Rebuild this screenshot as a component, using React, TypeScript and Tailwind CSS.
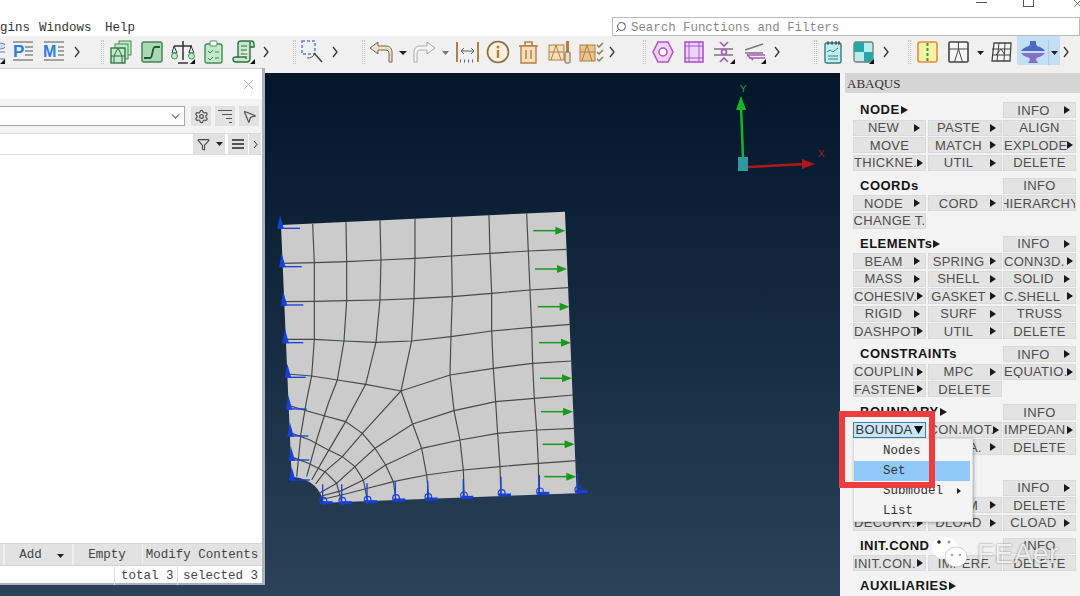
import React from "react";
import { X, ChevronDown, Search, Settings, MousePointer2, Filter } from "lucide-react";

const mono = { fontFamily: '"Liberation Mono", monospace' };

function S({ w, h = 24, className = "", children }: { w: number; h?: number; className?: string; children?: React.ReactNode }) {
  return (
    <svg width={w} height={h} viewBox={`0 0 ${w} ${h}`} className={`shrink-0 ${className}`} fill="none">
      {children}
    </svg>
  );
}
const Chev = ({ className }: { className: string }) => (
  <S w={6} className={className}><path d="M1 7l4 5-4 5" stroke="#333" strokeWidth="1.3" /></S>
);
const Sep = ({ className }: { className: string }) => (
  <div className={`w-[3px] h-[24px] border-x border-dotted border-[#c4c4c4] ${className}`} />
);
const Caret = ({ className, w = 8, c = "#222" }: { className: string; w?: number; c?: string }) => (
  <S w={w} className={className}><path d={`M0 11h${w}l-${w / 2} 4z`} fill={c} /></S>
);
const Corner = ({ x }: { x: number }) => <path d={`M${x} 24v-5l-5 5z`} fill="#111" />;

const G = "#3f8f55", GF = "#c3e8cb", T = "#b5803f", TF = "#f5dfbd", P = "#ad55c6", PF = "#efd3f7";

function Toolbar() {
  return (
    <div className="flex h-[37px] items-start pt-[4px] bg-[#f0f0f0] overflow-hidden">
      <S w={5}><ellipse cx="-1" cy="6" rx="7" ry="3" fill="#cfe0f2" stroke="#5b7fa8" /><path d="M6 6v13M-1 12h7M-1 19h7" stroke="#5b7fa8" /><Corner x={5} /></S>
      <S w={20} className="ml-[8px]">
        <text x="0" y="17" fontFamily="Liberation Sans" fontWeight="700" fontSize="17" fill="#2c7fdc">P</text>
        <path d="M0 2h20M12 7h8M12 11h8M12 15h8M0 20h20" stroke="#888" strokeWidth="1.3" />
      </S>
      <S w={20} className="ml-[11px]">
        <text x="-1" y="17" fontFamily="Liberation Sans" fontWeight="700" fontSize="16" fill="#2c7fdc">M</text>
        <path d="M0 2h20M14 7h6M14 11h6M14 15h6M0 20h20" stroke="#888" strokeWidth="1.3" />
      </S>
      <Chev className="ml-[10px]" />
      <Sep className="ml-[21px]" />
      <S w={22} className="ml-[6px]">
        <rect x="9" y="1" width="12" height="14" fill={GF} stroke={G} /><rect x="5" y="4" width="13" height="15" fill={GF} stroke={G} />
        <rect x="1" y="8" width="14" height="15" fill={GF} stroke="#2e6e40" strokeWidth="1.3" /><path d="M1 16h14M8 8l-4 8v7M8 8l4 8v7" stroke="#2e6e40" />
      </S>
      <S w={22} className="ml-[9px]">
        <rect x="1" y="2" width="20" height="20" rx="2" fill="#a9d9b4" stroke="#4e7f5a" strokeWidth="1.5" />
        <path d="M3 18h6c3 0 2-11 5-11h5" stroke="#1f5a30" strokeWidth="1.8" />
      </S>
      <S w={24} className="ml-[8px]">
        <path d="M12 1v19M3 6h18M7 23h10" stroke="#333" strokeWidth="1.5" />
        <path d="M3 6l-2 7h5zM20 6l-2 7h5z" stroke="#333" /><circle cx="3.500" cy="16" r="3" fill={GF} stroke={G} /><circle cx="20.500" cy="16" r="3" fill={GF} stroke={G} /><Corner x={24} />
      </S>
      <S w={19} className="ml-[9px]">
        <rect x="1" y="4" width="17" height="19" rx="2" fill={GF} stroke={G} strokeWidth="1.4" /><rect x="6" y="1" width="7" height="5" rx="1" fill="#fff" stroke={G} />
        <path d="M4 11l2 2 3-3M11 12h4M4 18l2 2 3-3M11 18h4" stroke={G} />
      </S>
      <S w={23} className="ml-[9px]">
        <path d="M6 18V4c0-2 1-3 3-3h10c2 0 3 1 3 3v3h-4M18 2v16c0 3-1 4-3 4H4c-2 0-3-1-3-3s1-2 3-2h10v2" fill={GF} stroke="#2e6e40" strokeWidth="1.4" />
        <path d="M9 6h6M9 10h6M9 14h6" stroke="#2e6e40" /><Corner x={23} />
      </S>
      <Chev className="ml-[8px]" />
      <Sep className="ml-[24px]" />
      <S w={22} className="ml-[5px]">
        <rect x="1" y="1" width="13" height="13" stroke="#6a78d8" strokeWidth="1.5" strokeDasharray="3 2" fill="#eef0fb" />
        <path d="M13 13l8 9" stroke="#444" strokeWidth="1.6" /><path d="M6 18a8 8 0 0 0 8-5" stroke="#555" />
      </S>
      <Chev className="ml-[9px]" />
      <Sep className="ml-[24px]" />
      <S w={24} className="ml-[4px]"><path d="M1 8l8-6v4h8c4 0 6 3 6 6v10h-3v-8c0-3-1-4-4-4H9v4z" fill={TF} stroke="#666" /></S>
      <Caret className="ml-[6px]" />
      <S w={23} className="ml-[6px]"><path d="M22 8l-8-6v4H7c-4 0-6 3-6 6v10h3v-8c0-3 1-4 4-4h6v4z" fill="#f6f6f6" stroke="#aaa" /></S>
      <Caret className="ml-[6px]" w={7} c="#777" />
      <S w={23} className="ml-[7px]">
        <path d="M1 2v20M22 2v20" stroke={T} strokeWidth="2" /><path d="M5 11h13M5 11l3-3M5 11l3 3M18 11l-3-3M18 11l-3 3" stroke="#666" />
        <path d="M4 21h15" stroke="#666" strokeDasharray="1 3" strokeWidth="3" />
      </S>
      <S w={24} className="ml-[7px]"><circle cx="12" cy="12" r="10.500" fill="#fbeeda" stroke="#8a6a45" strokeWidth="1.6" /><circle cx="12" cy="7" r="1.500" fill={T} /><path d="M12 10v8" stroke={T} strokeWidth="2.400" /></S>
      <S w={21} className="ml-[8px]">
        <path d="M1 6h19M7 5V2h7v3" stroke={T} strokeWidth="1.6" /><path d="M3 6h15v17H3z" fill={TF} stroke={T} strokeWidth="1.4" /><path d="M8 10v9M13 10v9" stroke={T} strokeWidth="1.4" />
      </S>
      <S w={23} className="ml-[9px]">
        <rect x="1" y="5" width="15" height="15" fill={TF} stroke={T} /><path d="M1 12h15M8 5l-5 15M8 5l5 15" stroke={T} />
        <rect x="18" y="1" width="3" height="11" fill={T} /><rect x="17" y="12" width="5" height="11" rx="1" fill={TF} stroke="#666" />
      </S>
      <S w={25} className="ml-[8px]">
        <rect x="1" y="5" width="15" height="16" fill="#e7c592" stroke={T} /><path d="M1 12h15M8 5l-5 16M8 5l5 16" stroke={T} />
        <path d="M18 5l2 2 4-4M18 12l2 2 4-4M18 19l2 2 4-4" stroke="#8a7a50" strokeWidth="1.5" />
      </S>
      <Chev className="ml-[5px]" />
      <Sep className="ml-[28px]" />
      <S w={22} className="ml-[6px]"><path d="M6 2h10l5 10-5 10H6L1 12z" fill={PF} stroke={P} strokeWidth="1.5" /><circle cx="11" cy="12" r="4" fill="#fff" stroke={P} strokeWidth="1.5" /></S>
      <S w={20} className="ml-[10px]"><rect x="1" y="2" width="18" height="20" fill={PF} stroke={P} strokeWidth="1.6" /><path d="M5 2v20M15 2v20M1 6h18M1 18h18" stroke={P} /></S>
      <S w={21} className="ml-[10px]">
        <path d="M0 9h19M0 15h19" stroke="#777" strokeWidth="1.5" /><circle cx="10" cy="12" r="2.500" stroke={P} strokeWidth="1.6" /><path d="M6 2l4 4 4-4M6 22l4-4 4 4" stroke={P} strokeWidth="1.6" /><Corner x={21} />
      </S>
      <S w={21} className="ml-[10px]">
        <path d="M0 10L18 4M0 13h18" stroke="#777" strokeWidth="1.4" /><path d="M2 15h18M2 15l6 5M4 18l16 0" stroke={P} strokeWidth="1.6" /><Corner x={21} />
      </S>
      <Chev className="ml-[8px]" />
      <Sep className="ml-[34px]" />
      <S w={18} className="ml-[7px]">
        <rect x="1" y="3" width="16" height="20" rx="2" fill="#c5eeee" stroke="#2b7f86" strokeWidth="1.4" /><path d="M4 1v4M8 1v4M12 1v4M15 1v4" stroke="#333" />
        <path d="M3 12l3-2 3 2 5-4M4 16h10M4 19h10" stroke="#2b7f86" />
      </S>
      <S w={21} className="ml-[11px]">
        <rect x="1" y="2" width="19" height="20" rx="2" fill="#b8ecea" stroke="#777" strokeWidth="1.3" />
        <rect x="1" y="2" width="10" height="10" fill="#2ba5a8" /><rect x="11" y="12" width="9" height="10" fill="#2ba5a8" /><Corner x={21} />
      </S>
      <Chev className="ml-[9px]" />
      <Sep className="ml-[19px]" />
      <S w={21} className="ml-[6px]"><rect x="1" y="2" width="19" height="20" rx="2" fill="#f4f4a6" stroke="#e88a3c" strokeWidth="1.6" /><path d="M10.500 3v18" stroke="#3f9a3c" strokeWidth="2" strokeDasharray="3 2" /></S>
      <S w={21} className="ml-[10px]"><rect x="1" y="2" width="19" height="20" rx="1" fill="#f6f6f6" stroke="#444" strokeWidth="1.6" /><path d="M1 9h19M10.500 2v7M10.500 9l-4 13M10.500 9l4 13" stroke="#444" /></S>
      <Caret className="ml-[8px]" w={7} />
      <S w={21} className="ml-[7px]"><path d="M3 3h17l-1 18H1z" fill="#f4f4f4" stroke="#444" strokeWidth="1.3" /><path d="M1 9h19M1 15h18M8 3L6 21M14 3l-1 18M10 9l-5 6M10 9l4 6" stroke="#444" /></S>
      <div className="ml-[5px] w-[43px] h-[29px] -mt-[4px] bg-[#c4dff5] flex items-start pt-[4px] pl-[3px]">
        <S w={26}>
          <path d="M10 1h6v3l1 2H9l1-2z" fill="#4f6ac4" />
          <path d="M1 11C4 7 9 5.500 13 5.500S22 7 25 11z" fill="#4f6ac4" />
          <path d="M1 13c3 4 8 5 12 5s9-1 12-5z" fill="#8470c4" />
          <path d="M9 17h8l-1 3 2 3H8l2-3z" fill="#8470c4" />
        </S>
        <div className="w-px h-[25px] bg-[#a8cbe8] ml-[2px]" />
        <Caret className="ml-[2px]" w={7} />
      </div>
      <Chev className="ml-[3px]" />
    </div>
  );
}

const Tri = ({ className = "", w = 6, h = 8 }: { className?: string; w?: number; h?: number }) => (
  <svg width={w} height={h} viewBox="0 0 6 8" preserveAspectRatio="none" className={`shrink-0 ${className}`}><path d="M0 0l6 4-6 4z" fill="#1a1a1a" /></svg>
);

type B = string | null;
function Btn({ b }: { b: B }) {
  if (b === null) return <div className="h-[16px]" />;
  const arrow = b.endsWith(">");
  const label = arrow ? b.slice(0, -1) : b;
  const long = arrow && label.length >= 7;
  return (
    <div className="h-[16px] bg-[#e3e3e3] border border-[#dadada] flex items-center overflow-hidden text-[13px] leading-none tracking-[0.3px] text-[#4d4d4d]">
      <span className={`flex-1 min-w-0 flex overflow-hidden whitespace-nowrap ${long ? "justify-start" : "justify-center"}`}>{label}</span>
      {arrow && <Tri className={long ? "mr-[2px] -ml-[4px]" : "mr-[5px] ml-[1px]"} />}
    </div>
  );
}

const sections: { title: string; arrow?: boolean; info?: string; rows: B[][] }[] = [
  { title: "NODE", arrow: true, info: "INFO>", rows: [["NEW>", "PASTE>", "ALIGN"], ["MOVE", "MATCH>", "EXPLODE>"], ["THICKNE.>", "UTIL>", "DELETE"]] },
  { title: "COORDs", info: "INFO", rows: [["NODE>", "CORD>", "HIERARCHY"], ["CHANGE T.", null, null]] },
  { title: "ELEMENTs", arrow: true, info: "INFO>", rows: [["BEAM>", "SPRING>", "CONN3D.>"], ["MASS>", "SHELL>", "SOLID>"], ["COHESIV.>", "GASKET>", "C.SHELL>"], ["RIGID>", "SURF>", "TRUSS"], ["DASHPOT>", "UTIL>", "DELETE"]] },
  { title: "CONSTRAINTs", info: "INFO>", rows: [["COUPLIN>", "MPC>", "EQUATIO.>"], ["FASTENE>", "DELETE", null]] },
  { title: "BOUNDARY", arrow: true, info: "INFO", rows: [["BOUNDA", "CON.MOT.>", "IMPEDAN>"], ["INERTIA", "MEDIA.>", "DELETE"], [null, null, null]] },
  { title: "LOADs", info: "INFO>", rows: [["BEAM", "FORM>", "DELETE"], ["DECURR.>", "DLOAD>", "CLOAD>"]] },
  { title: "INIT.COND", info: "INFO", rows: [["INIT.CON.>", "IMPERF.", "DELETE"]] },
  { title: "AUXILIARIES", arrow: true, rows: [["", "", ""]] },
];

function Panel() {
  return (
    <div className="w-[240px] shrink-0 bg-[#f3f3f3] overflow-hidden" style={{ fontFamily: '"Liberation Sans", sans-serif' }}>
      <div className="ml-[5px] h-[20px] bg-[#d6d6d6] flex items-center pl-[2px] pt-[1px] text-[#333] text-[13px]" style={{ fontFamily: '"Liberation Serif", serif' }}>ABAQUS</div>
      <div className="pt-[9px] pl-[13px] flex flex-col gap-y-[7px]">
        {sections.map((s) => (
          <div key={s.title} className="grid grid-cols-[73px_74px_73px] gap-x-[1.500px] gap-y-[1.500px]">
            <div className="col-span-2 h-[16px] pl-[7px] flex items-center gap-[1px] font-bold text-[13px] tracking-[0.5px] text-[#151515]">
              {s.title}{s.arrow && <Tri w={7} h={8} />}
            </div>
            {s.info ? <Btn b={s.info} /> : <div className="h-[16px]" />}
            {s.rows.flat().map((b, i) =>
              s.title === "BOUNDARY" && i === 0 ? (
                <div key={i} className="h-[16px] bg-[#cde5f8] border border-[#3a7fb8] flex items-center text-[13px] tracking-[0.2px] text-[#333] leading-none overflow-hidden">
                  <span className="flex-1 text-center">BOUNDA</span>
                  <svg width="9" height="8" viewBox="0 0 9 8" className="mr-[2px] shrink-0"><path d="M0 0h9L4.500 8z" fill="#111" /></svg>
                </div>
              ) : (
                <Btn key={i} b={b} />
              )
            )}
          </div>
        ))}
      </div>
    </div>
  );
}

const polys = [
  "50,190 150,188 245,185 348,180 450,175 560,168 675,160 790,153 905,148",
  "55,305 148,304 245,302 345,300 447,296 562,290 680,280 795,270 910,263",
  "60,418 148,418 237,423 333,427 440,423 558,410 680,393 800,382 917,373",
  "67,522 140,528 217,540 302,553 408,573 555,525 685,505 803,490 920,483",
  "143,72 148,188 148,300 148,418 140,528 125,600 108,700 95,830",
  "243,66 245,185 245,302 237,423 217,540 190,610 155,720 125,830",
  "345,60 348,180 345,300 333,427 302,553 242,665 180,770 140,840",
  "450,55 450,175 447,296 440,423 408,573 292,700 232,770 180,815 152,852",
  "408,573 443,672 470,745 485,825 492,897",
  "560,50 560,168 562,290 558,410 555,525 567,632 585,720 595,810 598,892",
  "672,45 675,160 680,280 680,393 685,505 692,605 698,700 705,800 708,885",
  "785,40 790,153 795,270 800,382 803,490 808,595 815,690 820,790 822,880",
  "925,585 808,595 692,605 567,632 443,672 330,745 270,800 215,850 165,878",
  "930,685 815,690 698,700 585,720 470,745 362,795 295,840 230,872 170,888",
  "935,782 820,790 705,800 595,810 485,825 385,845 308,865 230,885 175,897",
  "72,617 150,640 242,665 292,700 330,745 362,795 385,845 393,900",
  "75,698 135,720 180,745 232,770 270,800 295,840 308,905",
  "78,770 130,790 180,815 215,850 230,908",
];
const leftNodes = [[45, 75], [50, 190], [55, 305], [60, 418], [67, 522], [70, 617], [75, 698], [78, 770], [80, 830]];
const botNodes = [[175, 908], [232, 908], [308, 905], [393, 900], [490, 897], [597, 892], [710, 885], [825, 880], [940, 875]];
const arrows = [[805, 92], [810, 207], [818, 320], [822, 428], [825, 535], [828, 635], [833, 733], [838, 830]];

function Scene() {
  return (
    <svg width="840" height="523" viewBox="0 73 840 523" className="absolute inset-0" fill="none">
      <g transform="translate(265 200) scale(0.3333)">
        <path d="M48 75L900 35L935 880L175 908C170 870 140 835 80 830Z" fill="#cbcbcb" />
        {polys.map((p, i) => <polyline key={i} points={p} stroke="#45494c" strokeWidth="3.500" />)}
        {leftNodes.map(([x, y], i) => (
          <g key={i}>
            <path d={`M${x - 8} ${y + 12}L${x} ${y - 30}L${x + 12} ${y + 12}Z`} fill="#1640d8" />
            <path d={`M${x} ${y + 10}h${i < 3 ? 60 : 55}`} stroke="#1640d8" strokeWidth="4" />
          </g>
        ))}
        {botNodes.map(([x, y], i) => (
          <g key={i}>
            <path d={`M${x - 2} ${y}v-55`} stroke="#1640d8" strokeWidth="4" />
            <circle cx={x} cy={y - 6} r="10" stroke="#1640d8" strokeWidth="3.500" />
            <path d={`M${x - 8} ${y}h36`} stroke="#1640d8" strokeWidth="9" />
          </g>
        ))}
        {arrows.map(([x, y], i) => (
          <g key={i}>
            <path d={`M${x} ${y}h70`} stroke="#179a1c" strokeWidth="4.500" />
            <path d={`M${x + 66} ${y - 12}L${x + 96} ${y}L${x + 66} ${y + 12}Z`} fill="#179a1c" />
          </g>
        ))}
      </g>
      <path d="M743 158L741 106" stroke="#12b52a" strokeWidth="2.500" />
      <path d="M741 96L736 110H746Z" fill="#12b52a" />
      <path d="M748 167L805 164" stroke="#b01818" strokeWidth="2.500" />
      <path d="M815 164L802 159V169Z" fill="#b01818" />
      <rect x="738" y="157" width="10" height="14" fill="#2f979e" />
      <text x="740" y="92" fontFamily="Liberation Mono" fontSize="11" fill="#1f9f35">Y</text>
      <text x="818" y="157" fontFamily="Liberation Mono" fontSize="11" fill="#a02020">X</text>
    </svg>
  );
}

function Dialog() {
  return (
    <div className="absolute left-0 top-[68px] w-[265px] h-[517px] bg-white border-r-[3px] border-b-[2px] border-[#aab2ba] flex flex-col text-[12.500px] text-[#444]" style={mono}>
      <div className="h-[31px] flex items-center justify-end pr-[5px] border-t border-[#ccc]">
        <X size={17} strokeWidth={1} color="#999" />
      </div>
      <div className="h-[34px] bg-[#f3f3f3] flex items-center pr-[3px]">
        <div className="w-[185px] h-[20px] bg-white border border-[#aaa] border-l-0 flex items-center justify-end pr-[2px]">
          <ChevronDown size={13} color="#666" />
        </div>
        <div className="ml-[6px] w-[20px] h-[20px] bg-[#e2e2e2] flex items-center justify-center"><Settings size={15} color="#555" /></div>
        <div className="ml-[4px] w-[20px] h-[20px] bg-[#e2e2e2] flex flex-col items-end justify-center gap-[3px] pr-[3px]">
          <div className="w-[14px] h-px bg-[#555]" /><div className="w-[10px] h-px bg-[#555]" /><div className="w-[6px] h-px bg-[#555]" /><div className="w-[3px] h-px bg-[#555]" />
        </div>
        <div className="ml-[4px] w-[20px] h-[20px] bg-[#e2e2e2] flex items-center justify-center"><MousePointer2 size={15} color="#555" /></div>
      </div>
      <div className="h-[22px] flex items-center bg-white border-y border-[#ddd]">
        <div className="ml-[193px] w-[20px] h-[20px] bg-[#e2e2e2] flex items-center justify-center"><Filter size={13} color="#444" /></div>
        <div className="w-[12px] h-[20px] bg-[#e2e2e2] flex items-center justify-center"><svg width="7" height="4" viewBox="0 0 7 4"><path d="M0 0h7L3.500 4z" fill="#222" /></svg></div>
        <div className="ml-[3px] w-[20px] h-[20px] bg-[#e2e2e2] flex flex-col items-center justify-center gap-[2px]">
          <div className="w-[12px] h-[2px] bg-[#555]" /><div className="w-[12px] h-[2px] bg-[#555]" /><div className="w-[12px] h-[2px] bg-[#555]" />
        </div>
        <div className="ml-[1px] w-[12px] h-[20px] bg-[#e2e2e2] flex items-center justify-center"><svg width="5" height="9" viewBox="0 0 5 9"><path d="M1 1l3 3.500-3 3.500" stroke="#333" fill="none" /></svg></div>
      </div>
      <div className="flex-1 bg-white" />
      <div className="h-[23px] bg-[#f0f0f0] flex border-y border-[#d2d2d2]">
        <div className="w-[3px] bg-[#e2e2e2]" />
        <div className="ml-[2px] w-[67px] bg-[#e2e2e2] flex items-center justify-center gap-[15px] pl-[6px] pt-[2px]">Add<svg width="7" height="4" viewBox="0 0 7 4"><path d="M0 0h7L3.500 4z" fill="#222" /></svg></div>
        <div className="ml-[2px] w-[68px] bg-[#e2e2e2] flex items-center justify-center pt-[2px] pr-[2px]">Empty</div>
        <div className="ml-[1px] w-[118px] bg-[#e2e2e2] flex items-center justify-center whitespace-nowrap pt-[2px]">Modify Contents</div>
      </div>
      <div className="h-[17px] flex items-center justify-end bg-white pt-[3px]">
        <div className="border-l border-[#ddd] pl-[6px] w-[63px]">total 3</div>
        <div className="border-l border-[#ddd] pl-[5px] w-[85px] whitespace-nowrap">selected 3</div>
      </div>
    </div>
  );
}

export default function App() {
  return (
    <div className="relative w-[1080px] h-[596px] overflow-hidden flex flex-col bg-white">
      <div className="h-[36px] shrink-0 flex items-end bg-white relative" style={mono}>
        <div className="flex h-[19px] items-center pt-[4px] text-[12.500px] text-[#333] whitespace-pre">
          <span className="w-[39px]">gins</span><span className="w-[66px]">Windows</span><span>Help</span>
        </div>
        <div className="absolute right-0 top-[17px] left-[612px] h-[19px] border border-[#bbb] bg-white flex items-center pl-[2px] text-[12.400px] text-[#888]">
          <Search size={12} color="#555" className="mr-[4px] -scale-x-100" /><span className="mt-[3px]">Search Functions and Filters</span>
        </div>
        <div className="absolute left-[976px] top-[2px] w-[11px] h-px bg-[#555]" />
        <div className="absolute left-[1023px] -top-[3px] w-[11px] h-[10px] border border-[#555]" />
        <X size={13} color="#444" strokeWidth={1.3} className="absolute left-[1071px] -top-[3px]" />
      </div>
      <Toolbar />
      <div className="flex-1 flex min-h-0">
        <div className="relative flex-1 bg-gradient-to-b from-[#03162a] to-[#2b4259]">
          <Scene />
        </div>
        <Panel />
      </div>
      <Dialog />
      <div className="absolute left-[853px] top-[438px] w-[120px] h-[84px] bg-[#f4f4f4] border border-[#ddd] shadow-[1px_1px_3px_rgba(0,0,0,0.3)] flex flex-col pt-[2px] text-[12.500px] text-[#333]" style={mono}>
        <div className="h-[20px] pl-[29px] flex items-center">Nodes</div>
        <div className="h-[20px] pl-[29px] mr-[2px] flex items-center bg-[#90c8f8]">Set</div>
        <div className="h-[20px] pl-[29px] flex items-center">Submodel<svg width="4" height="6" viewBox="0 0 4 6" className="ml-[14px]"><path d="M0 0l4 3-4 3z" fill="#222" /></svg></div>
        <div className="h-[20px] pl-[29px] flex items-center">List</div>
      </div>
      <div className="absolute left-[839px] top-[411px] w-[96px] h-[77px] border-[6px] border-[#ee3d3f]" />
      <div className="absolute left-[931px] top-[535px] flex items-start" style={{ fontFamily: '"Liberation Sans", sans-serif' }}>
        <svg width="46" height="33" viewBox="0 0 46 33" className="shrink-0">
          <ellipse cx="14" cy="13" rx="13" ry="11" fill="#fff" fillOpacity="0.9" />
          <ellipse cx="25" cy="22" rx="11" ry="10" fill="#fff" stroke="#777" strokeOpacity="0.35" />
          <circle cx="8" cy="7" r="1.800" fill="#222" /><circle cx="18" cy="7" r="1.500" fill="#999" />
          <circle cx="21" cy="20" r="1.300" fill="#aaa" /><circle cx="29" cy="20" r="1.300" fill="#aaa" />
        </svg>
        <span className="text-[28px] tracking-[0.5px] leading-none mt-[5px] text-white/85 [text-shadow:0_0_2px_rgba(0,0,0,0.5)]">FEAer</span>
      </div>
    </div>
  );
}
